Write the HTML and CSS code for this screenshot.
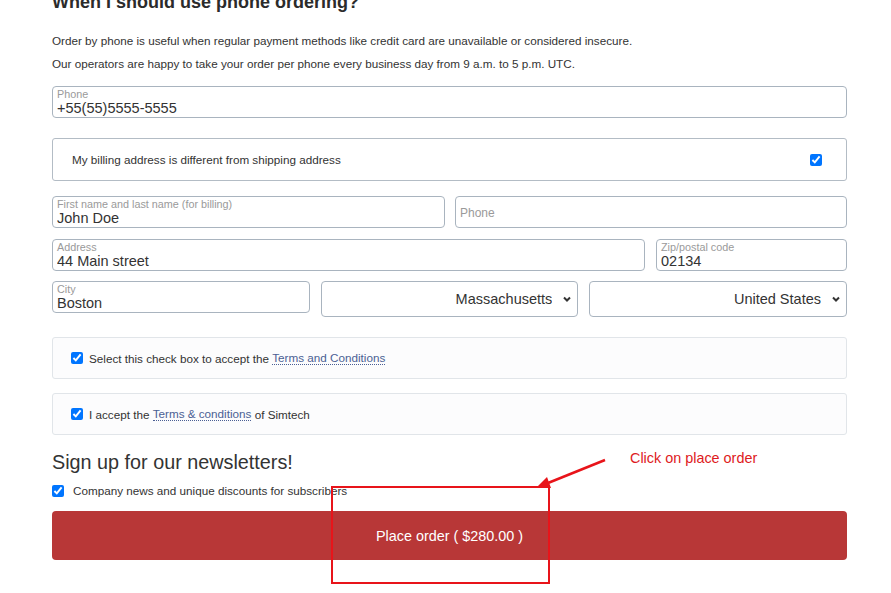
FILE: index.html
```html
<!DOCTYPE html>
<html lang="en">
<head>
  <meta charset="UTF-8">
  <meta name="viewport" content="width=device-width, initial-scale=1.0">
  <title>Checkout - Phone ordering</title>
  <link rel="stylesheet" href="styles.css">
</head>
<body>
  <div class="checkout">
    <h2 class="section-title">When I should use phone ordering?</h2>
    <p class="note">Order by phone is useful when regular payment methods like credit card are unavailable or considered insecure.</p>
    <p class="note">Our operators are happy to take your order per phone every business day from 9 a.m. to 5 p.m. UTC.</p>

    <div class="field field-full">
      <label for="phone">Phone</label>
      <input type="text" id="phone" value="+55(55)5555-5555">
    </div>

    <label class="toggle-box">
      <span>My billing address is different from shipping address</span>
      <input type="checkbox" checked>
    </label>

    <div class="row row-half">
      <div class="field">
        <label for="b-name">First name and last name (for billing)</label>
        <input type="text" id="b-name" value="John Doe">
      </div>
      <div class="field field-empty">
        <input type="text" id="b-phone" placeholder="Phone">
      </div>
    </div>

    <div class="row row-address">
      <div class="field">
        <label for="b-address">Address</label>
        <input type="text" id="b-address" value="44 Main street">
      </div>
      <div class="field">
        <label for="b-zip">Zip/postal code</label>
        <input type="text" id="b-zip" value="02134">
      </div>
    </div>

    <div class="row row-thirds">
      <div class="field">
        <label for="b-city">City</label>
        <input type="text" id="b-city" value="Boston">
      </div>
      <div class="picker">
        <select>
          <option>Massachusetts</option>
        </select>
        <svg class="chevron" width="8" height="6" viewBox="0 0 8 6"><path d="M1 1.5l3 3 3-3" fill="none" stroke="#333" stroke-width="2"/></svg>
      </div>
      <div class="picker">
        <select>
          <option>United States</option>
        </select>
        <svg class="chevron" width="8" height="6" viewBox="0 0 8 6"><path d="M1 1.5l3 3 3-3" fill="none" stroke="#333" stroke-width="2"/></svg>
      </div>
    </div>

    <div class="agree-box">
      <label><input type="checkbox" checked>Select this check box to accept the <a href="#">Terms and Conditions</a></label>
    </div>
    <div class="agree-box">
      <label><input type="checkbox" checked>I accept the <a href="#">Terms &amp; conditions</a> of Simtech</label>
    </div>

    <h3 class="newsletter-title">Sign up for our newsletters!</h3>
    <label class="subscribe">
      <input type="checkbox" checked>
      <span>Company news and unique discounts for subscribers</span>
    </label>

    <button class="place-order">Place order ( $280.00 )</button>

    <!-- hint callout over the button -->
    <div class="callout">
      <span class="callout-text">Click on place order</span>
      <svg class="callout-arrow" width="80" height="40" viewBox="0 0 80 40">
        <line x1="75" y1="8" x2="18" y2="31" stroke="#e8141a" stroke-width="2.5"/>
        <polygon points="7,35 17,25 21,36" fill="#e8141a"/>
      </svg>
      <div class="callout-frame"></div>
    </div>
  </div>
</body>
</html>
```

FILE: styles.css
```css
body {
    margin: 0;
    font-family: "Liberation Sans", Arial, sans-serif;
    color: #333;
    background: #fff;
}
.checkout {
    display: flow-root;
    position: relative;
    width: 795px;
    padding: 0 0 40px 52px;
}
.section-title {
    font-size: 18px;
    line-height: 22px;
    font-weight: bold;
    color: #2b2b2b;
    margin: -9px 0 20px;
}
.note {
    font-size: 11.7px;
    line-height: 16px;
    margin: 0 0 7px;
    color: #333;
}
.note + .note {
    margin-bottom: 14px;
}
.field {
    box-sizing: border-box;
    height: 32px;
    min-width: 0;
    border: 1px solid #a9b4bf;
    border-radius: 4px;
    padding: 1px 4px 0;
    background: #fff;
}
.field label {
    display: block;
    font-size: 10.8px;
    line-height: 12px;
    color: #9a9a9a;
    white-space: nowrap;
}
.field input {
    display: block;
    width: 100%;
    border: none;
    outline: none;
    padding: 0;
    font-family: inherit;
    font-size: 14.5px;
    line-height: 17px;
    color: #333;
    background: transparent;
}
.field-empty input {
    height: 30px;
    font-size: 12px;
}
.field-empty input::placeholder {
    color: #9a9a9a;
}
.field-full {
    margin-bottom: 20px;
}
.toggle-box {
    box-sizing: border-box;
    height: 43px;
    display: flex;
    align-items: center;
    justify-content: space-between;
    padding: 0 24px 0 19px;
    border: 1px solid #b3bcc5;
    border-radius: 3px;
    font-size: 11.7px;
    margin-bottom: 15px;
}
.toggle-box input {
    margin: 0;
    width: 12px;
    height: 12px;
}
.row {
    display: grid;
    gap: 11px;
    margin-bottom: 11px;
}
.row-half {
    grid-template-columns: 393px 1fr;
    gap: 10px;
}
.row-address {
    grid-template-columns: 1fr 191px;
    margin-bottom: 10px;
}
.row-thirds {
    grid-template-columns: 1fr 1fr 1fr;
    align-items: start;
    margin-bottom: 20px;
}
.picker {
    position: relative;
    height: 36px;
}
.picker select {
    box-sizing: border-box;
    width: 100%;
    height: 36px;
    appearance: none;
    -webkit-appearance: none;
    border: 1px solid #a9b4bf;
    border-radius: 4px;
    background: #fff;
    font-family: inherit;
    font-size: 14.5px;
    color: #333;
    text-align: right;
    text-align-last: right;
    padding: 0 25px 0 8px;
}
.chevron {
    position: absolute;
    right: 7px;
    top: 15px;
    pointer-events: none;
}
.agree-box {
    box-sizing: border-box;
    height: 42px;
    display: flex;
    align-items: center;
    padding: 0 18px;
    border: 1px solid #e1e5e9;
    border-radius: 3px;
    background: #fcfcfd;
    font-size: 11.7px;
    margin-bottom: 14px;
}
.agree-box label {
    display: flex;
    align-items: center;
    white-space: pre;
}
.agree-box input {
    width: 12px;
    height: 12px;
    margin: 0 6px 0 0;
}
.agree-box a {
    color: #4b5f94;
    text-decoration: none;
    border-bottom: 1px dotted #4b5f94;
}
.newsletter-title {
    font-size: 19.8px;
    font-weight: normal;
    line-height: 24px;
    color: #333;
    margin: 15px 0 10px;
}
.subscribe {
    display: flex;
    align-items: center;
    font-size: 11.7px;
    margin-bottom: 14px;
}
.subscribe input {
    width: 12px;
    height: 12px;
    margin: 0 9px 0 0;
}
.place-order {
    display: block;
    width: 100%;
    height: 49px;
    border: none;
    border-radius: 4px;
    background: #b83737;
    color: #fff;
    font-family: inherit;
    font-size: 14.4px;
    cursor: pointer;
}
.callout {
    position: absolute;
    left: 0;
    top: 0;
}
.callout-text {
    position: absolute;
    left: 630px;
    top: 450px;
    white-space: nowrap;
    font-size: 14.4px;
    color: #de1a22;
}
.callout-arrow {
    position: absolute;
    left: 530px;
    top: 452px;
}
.callout-frame {
    position: absolute;
    left: 331px;
    top: 486px;
    width: 215px;
    height: 94px;
    border: 2px solid #e8141a;
}
```
